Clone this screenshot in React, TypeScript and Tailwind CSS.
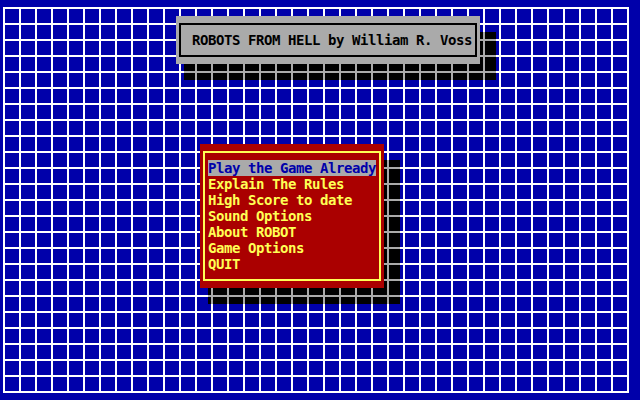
const menuItems = [
  'Play the Game Already',
  'Explain The Rules',
  'High Score to date',
  'Sound Options',
  'About ROBOT',
  'Game Options',
  'QUIT',
];

const selected = 0;

export default function App() {
  return (
    <div className="relative w-[640px] h-[400px] overflow-hidden bg-[#0000aa] font-['DejaVu_Sans_Mono','Liberation_Mono',monospace] font-bold text-[14px] tracking-[-0.43px] leading-[16px]">
      {/* the white grid wallpaper */}
      <div className="absolute left-[3px] top-[7px] w-[626px] h-[386px] [background-image:linear-gradient(to_right,#ffffff_0_2px,transparent_2px_16px),linear-gradient(to_bottom,#ffffff_0_2px,transparent_2px_16px)] [background-size:16px_16px]" />

      <div className="relative flex flex-col">
        {/* title window */}
        <div className="relative mt-[16px] ml-[176px] w-[304px] h-[48px]">
          <div className="absolute left-[8px] top-[16px] w-[312px] h-[48px] bg-black [background-image:linear-gradient(to_right,#aaaaaa_0_2px,transparent_2px_16px),linear-gradient(to_bottom,#aaaaaa_0_2px,transparent_2px_16px)] [background-size:16px_16px] [background-position:11px_7px]" />
          <div className="relative flex h-full bg-[#aaaaaa] px-[3px] py-[7px]">
            <div className="flex-1 border-2 border-black pl-[11px] pt-[7px] text-black whitespace-pre">
              ROBOTS FROM HELL by William R. Voss
            </div>
          </div>
        </div>

        {/* main menu */}
        <div className="relative mt-[80px] ml-[200px] w-[184px] h-[144px]">
          <div className="absolute left-[8px] top-[16px] w-[192px] h-[144px] bg-black [background-image:linear-gradient(to_right,#aaaaaa_0_2px,transparent_2px_16px),linear-gradient(to_bottom,#aaaaaa_0_2px,transparent_2px_16px)] [background-size:16px_16px] [background-position:3px_7px]" />
          <div className="relative flex h-full bg-[#aa0000] px-[3px] py-[7px]">
            <div className="flex flex-1 flex-col items-start border-2 border-[#ffff55] pl-[3px] pt-[7px]">
              {menuItems.map((item, i) => (
                <div
                  key={item}
                  className={
                    i === selected
                      ? 'h-[16px] whitespace-pre bg-[#aaaaaa] text-[#0000aa]'
                      : 'h-[16px] whitespace-pre text-[#ffff55]'
                  }
                >
                  {item}
                </div>
              ))}
            </div>
          </div>
        </div>
      </div>
    </div>
  );
}
